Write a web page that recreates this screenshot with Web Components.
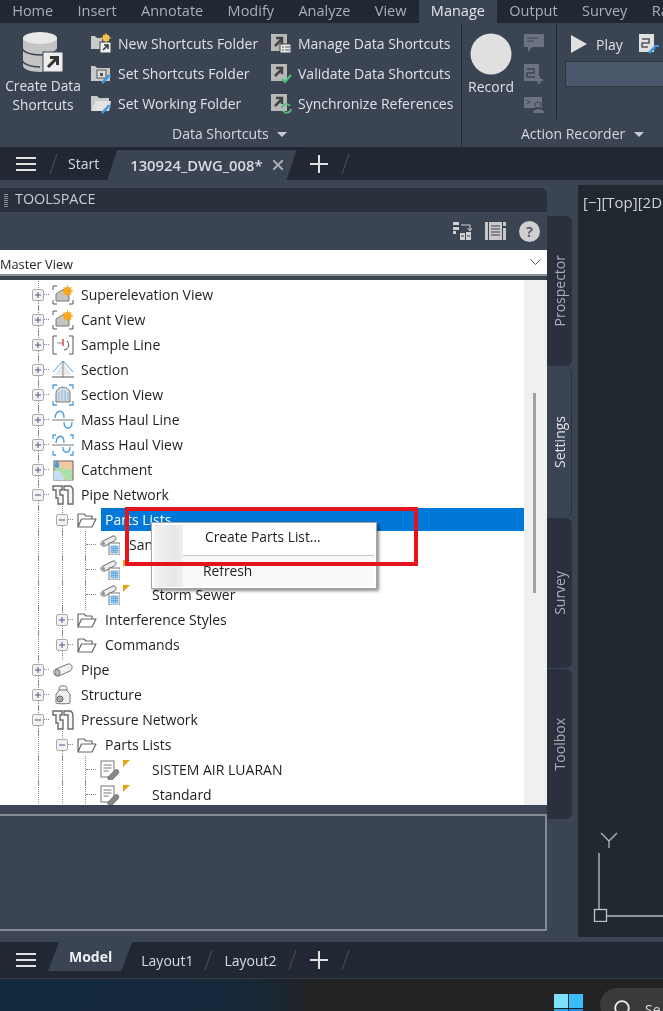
<!DOCTYPE html>
<html>
<head>
<meta charset="utf-8">
<title>Toolspace</title>
<style>
  html, body { margin: 0; height: 100%; background: #3b4453; overflow: hidden; }
  body { font-family: "Open Sans", "Noto Sans", sans-serif; }
  app-shell { filter: blur(.35px); }
</style>
</head>
<body>
<app-shell></app-shell>

<script>
// icons used in more than one place
const ICONS = {
  db: `<svg width="40" height="41" viewBox="0 0 40 41"><path d="M0 6v28c0 3 8 6 17 6s17-3 17-6V6z" fill="#c4c4c4"/><ellipse cx="17" cy="6" rx="17" ry="6" fill="#e8e8e8"/><path d="M0 17c0 3 8 6 17 6s17-3 17-6" fill="none" stroke="#3b4453" stroke-width="1.500"/><path d="M0 29c0 3 8 6 17 6" fill="none" stroke="#3b4453" stroke-width="1.500"/><rect x="20" y="20" width="20" height="20" fill="#eee" stroke="#3b4453"/><path d="M25 35l9-9M27 25.500h7.500v7.500" fill="none" stroke="#333" stroke-width="3"/></svg>`,
  newFolder: `<svg width="21" height="21" viewBox="0 0 21 21"><path d="M0 3h4l2 2h5v11H0z" fill="#c9c9c9"/><rect x="9" y="9" width="11" height="11" fill="#eee" stroke="#3b4453"/><path d="M12 17l5-5M13 12h4v4" fill="none" stroke="#333" stroke-width="1.500"/><circle cx="15" cy="5" r="3.500" fill="#f5c24a"/><path d="M15 0v10M10 5h10M12 2l6 6M18 2l-6 6" stroke="#f5c24a"/></svg>`,
  setFolder: `<svg width="21" height="21" viewBox="0 0 21 21"><path d="M0 3h4l2 2h13v13H0z" fill="#c9c9c9"/><rect x="6" y="7" width="9" height="8" fill="#ddd" stroke="#555"/><rect x="9" y="10" width="3" height="3" fill="#555"/><path d="M11 20l6-6" stroke="#3f97e0" stroke-width="2.500"/><path d="M16 13l4 0" stroke="#3f97e0" stroke-width="2"/></svg>`,
  workFolder: `<svg width="21" height="21" viewBox="0 0 21 21"><path d="M0 3h6l2 2h10v3H4L2 18H0z" fill="#c9c9c9"/><path d="M4 8h16l-2 10H1z" fill="#e2e2e2"/><path d="M11 20l6-6" stroke="#3f97e0" stroke-width="2.500"/><path d="M16 13l4 0" stroke="#3f97e0" stroke-width="2"/></svg>`,
  manage: `<svg width="21" height="21" viewBox="0 0 21 21"><rect y="1" width="16" height="17" fill="#b8b8b8"/><path d="M4 13l7-7M5 5h6v6" fill="none" stroke="#444" stroke-width="2.500"/><rect x="9" y="11" width="11" height="9" fill="#ececec" stroke="#3b4453"/><path d="M11 14h2M14 14h5M11 17h2M14 17h5" stroke="#555"/></svg>`,
  validate: `<svg width="21" height="21" viewBox="0 0 21 21"><rect y="1" width="16" height="17" fill="#b8b8b8"/><path d="M4 13l7-7M5 5h6v6" fill="none" stroke="#444" stroke-width="2.500"/><path d="M11 16l3 3 6-7" fill="none" stroke="#4cc27a" stroke-width="2.200"/></svg>`,
  sync: `<svg width="21" height="21" viewBox="0 0 21 21"><rect y="1" width="16" height="17" fill="#b8b8b8"/><path d="M4 13l7-7M5 5h6v6" fill="none" stroke="#444" stroke-width="2.500"/><path d="M11 15a4.500 4.500 0 0 1 8-2M20 16a4.500 4.500 0 0 1-8 2" fill="none" stroke="#4cc27a" stroke-width="1.800"/></svg>`,
  bubble: `<svg width="21" height="20" viewBox="0 0 21 20"><path d="M0 0h20v13H8l-4 5v-5H0z" fill="#6b7280"/><path d="M3 4h11M3 7h7" stroke="#3b4453"/></svg>`,
  stepAdd: `<svg width="21" height="20" viewBox="0 0 21 20"><rect width="15" height="17" fill="#6b7280"/><path d="M3 5h7v4H3v4h8" fill="none" stroke="#3b4453" stroke-width="1.500"/><path d="M15 12v8M11 16h8" stroke="#6b7280" stroke-width="2.500"/></svg>`,
  stepUser: `<svg width="21" height="17" viewBox="0 0 21 17"><rect y="0" width="18" height="11" fill="#6b7280"/><path d="M3 3l3 2-3 2" fill="none" stroke="#3b4453"/><circle cx="14" cy="8" r="3" fill="#6b7280" stroke="#3b4453"/><path d="M9 16c0-5 11-5 11 0z" fill="#6b7280"/></svg>`,
  stepTool: `<svg width="21" height="20" viewBox="0 0 21 20"><rect width="15" height="18" fill="#e0e0e0"/><path d="M3 5h7v4H3v4h6" fill="none" stroke="#555" stroke-width="1.500"/><path d="M10 19l6-6" stroke="#3f97e0" stroke-width="2.500"/><path d="M15 12l5 0" stroke="#3f97e0" stroke-width="2"/></svg>`,
  flip: `<svg width="19" height="18" viewBox="0 0 19 18"><path d="M0 0h6v3H0zM0 5h6v3H0zM0 9h3v3H0z" fill="#d0d0d0"/><path d="M8 3h9v5M14.500 6l2.500 3 2-3" fill="none" stroke="#d0d0d0"/><path d="M7 11h5v7H7zM13 10h5v8h-5z" fill="#d0d0d0"/><path d="M8 14h3M14 14h3" stroke="#3b4453"/></svg>`,
  sheet: `<svg width="21" height="18" viewBox="0 0 21 18"><path d="M0 0h3v18H0zM4 0h13v18H4zM18 6h3v12h-3zM18 0h3v4h-3z" fill="#c8c8c8"/><path d="M6 4h9M6 7h9M6 10h9M6 13h9" stroke="#3b4453"/></svg>`,
  pipeNet: `<svg width="22" height="20" viewBox="0 0 22 20"><path d="M1 1h9v4H8v5h3v9H6v-6H4V5H1zM12 1h5c3 0 4 2 4 5v13h-5V5h-4z" fill="#f6f6f6" stroke="#6a6a6a" stroke-width="1.400"/></svg>`,
  super: `<svg width="22" height="20" viewBox="0 0 22 20"><path d="M5 1H1v4M1 15v4h4M21 15v4h-4" fill="none" stroke="#555"/><path d="M4 9l8-5 5 4v8H4z" fill="#c5c5c5" stroke="#777"/><circle cx="15.500" cy="6" r="4" fill="#f6a81c"/><path d="M15.500 0v12M9.500 6h12M11.500 2l8 8M19.500 2l-8 8" stroke="#f6a81c"/></svg>`,
  sample: `<svg width="22" height="20" viewBox="0 0 22 20"><path d="M5 1H1v18h4M17 1h4v18h-4" fill="none" stroke="#555"/><path d="M5 8h6" stroke="#888"/><path d="M11 4v7" stroke="#d9484a" stroke-width="1.500"/><path d="M15 6c3 3 2 8-3 9" fill="none" stroke="#444"/></svg>`,
  section: `<svg width="22" height="20" viewBox="0 0 22 20"><path d="M11 1L1 12" stroke="#4a9ee0" fill="none"/><path d="M11 1l10 11" stroke="#4a9ee0" fill="none"/><path d="M11 2v15" stroke="#777"/><path d="M0 17h22" stroke="#555"/><path d="M10 4L3 15h7zM12 4l7 11h-7z" fill="#e8e8e8"/></svg>`,
  sectionView: `<svg width="22" height="22" viewBox="0 0 22 22"><path d="M1 5V1h4M17 1h4v4M1 17v4h4M21 17v4h-4" fill="none" stroke="#4a9ee0" stroke-width="1.300"/><path d="M4 18V10c0-9 14-9 14 0v8z" fill="#cfe0ee" stroke="#777"/><path d="M7 8v10M10 6v12M13 6v12M16 8v10" stroke="#9cb4c8"/></svg>`,
  massLine: `<svg width="22" height="20" viewBox="0 0 22 20"><path d="M0 10h22" stroke="#777"/><path d="M3 8c1-9 9-9 9 0" fill="none" stroke="#4a9ee0" stroke-width="1.300"/><path d="M12 12c0 8 8 8 8 0" fill="none" stroke="#4a9ee0" stroke-width="1.300"/></svg>`,
  massView: `<svg width="22" height="22" viewBox="0 0 22 22"><path d="M1 5V1h3M18 1h3v4M1 17v4h3M21 17v4h-3" fill="none" stroke="#4a9ee0" stroke-width="1.300"/><path d="M0 11h22" stroke="#777"/><path d="M4 9c1-9 8-9 8 0" fill="none" stroke="#4a9ee0" stroke-width="1.300"/><path d="M11 13c0 7 7 7 7 0" fill="none" stroke="#4a9ee0" stroke-width="1.300"/></svg>`,
  catchment: `<svg width="22" height="22" viewBox="0 0 22 22"><rect x="2" y="2" width="19" height="19" fill="#f4c7a0" stroke="#666"/><path d="M2 12c6-1 8 3 11 9H2z" fill="#bfe0f5"/><path d="M3 9c7-2 14 3 17 1v11h-6C12 15 8 11 3 12z" fill="#a9e2a9"/><path d="M5 1c3 4 3 8 0 8s-3-4 0-8z" fill="#4a9ee0"/></svg>`,
  folder: `<svg width="20" height="16" viewBox="0 0 20 16"><path d="M1 15V2h6l2 2h6v3M1 15L4.500 7H19l-4 8z" fill="#fff" stroke="#666" stroke-width="1.200" stroke-linejoin="round"/></svg>`,
  pipeList: `<svg width="20" height="20" viewBox="0 0 20 20"><path d="M3 6l10-5c3-.5 4 3 2 4.500L5 11C0 12 0 7 3 6z" fill="#eee" stroke="#666"/><circle cx="3.500" cy="8.500" r="1.500" fill="#888"/><rect x="9" y="8" width="11" height="12" fill="#fff" stroke="#777"/><path d="M11 11h7v7h-7zM11 13.300h7M11 15.600h7M13.300 11v7M15.600 11v7" fill="#bcdcf5" stroke="#3f97e0" stroke-width=".7"/></svg>`,
  pressList: `<svg width="20" height="20" viewBox="0 0 20 20"><rect x="1" y="1" width="13" height="16" fill="#fff" stroke="#777"/><path d="M3.500 5h8M3.500 8h8M3.500 11h5" stroke="#777"/><path d="M8 17l7-7c3-2 5 2 3 4l-6 6c-3 1-5-1-4-3z" fill="#888" stroke="#555" stroke-width=".6"/></svg>`,
  pipe: `<svg width="20" height="14" viewBox="0 0 20 14"><path d="M3 6l12-5c5-1 5 6 2 7L6 13C0 14 -1 7 3 6z" fill="#f2f2f2" stroke="#777"/><ellipse cx="4.500" cy="9.500" rx="2.500" ry="3" fill="#bbb" stroke="#777"/></svg>`,
  structure: `<svg width="18" height="20" viewBox="0 0 18 20"><path d="M5 3c0-3 8-3 8 0v3l3 3v9c0 1-14 1-14 0V9l3-3z" fill="#efefef" stroke="#777"/><path d="M5 5h8" stroke="#777"/><circle cx="6" cy="14" r="3" fill="#aaa" stroke="#666"/></svg>`
};
const SLASH = `<svg class="slash" width="9" height="20" viewBox="0 0 9 20"><path d="M8 0L1 20" stroke="#4b5361"/></svg>`;
const BURGER = `<svg width="20" height="16" viewBox="0 0 20 16" style="flex:none"><path d="M0 2h20M0 8h20M0 14h20" stroke="#e0e0e0" stroke-width="2"/></svg>`;
const PLUS = `<svg class="plus" width="18" height="18" viewBox="0 0 18 18"><path d="M9 0v18M0 9h18" stroke="#e0e0e0" stroke-width="2"/></svg>`;

class AppShell extends HTMLElement {
  constructor() {
    super();
    this.attachShadow({ mode: "open" });
    this.shadowRoot.innerHTML = `
      <style>
        :host { display: flex; flex-direction: column; width: 663px; height: 1011px; overflow: hidden; position: relative; }
        .work { display: flex; height: 762px; padding-top: 8px; box-sizing: border-box; background: #3b4453; flex: none; }
      </style>
      <ribbon-tabs></ribbon-tabs>
      <ribbon-body></ribbon-body>
      <file-tabs></file-tabs>
      <div class="work">
        <tool-space></tool-space>
        <side-tabs></side-tabs>
        <model-view></model-view>
      </div>
      <layout-tabs></layout-tabs>
      <task-bar></task-bar>
      <red-mark></red-mark>
    `;
  }
}

class RibbonTabs extends HTMLElement {
  constructor() {
    super();
    this.attachShadow({ mode: "open" });
    const tabs = ["Home", "Insert", "Annotate", "Modify", "Analyze", "View", "Manage", "Output", "Survey", "Ra"];
    this.shadowRoot.innerHTML = `
      <style>
        :host { display: flex; height: 23px; background: #212833; color: #a9afb8; font-size: 14.500px; overflow: hidden; white-space: nowrap; flex: none; }
        span { padding: 0 12.200px; line-height: 21px; }
        .on { background: #3b4453; color: #e4e6e9; }
      </style>
      ${tabs.map(t => `<span class="${t === "Manage" ? "on" : ""}">${t}</span>`).join("")}
    `;
  }
}

class RibbonBody extends HTMLElement {
  constructor() {
    super();
    this.attachShadow({ mode: "open" });
    this.shadowRoot.innerHTML = `
      <style>
        :host { display: flex; height: 124px; background: #3b4453; color: #dfe2e6; font-size: 14px; flex: none; white-space: nowrap; }
        .panel { display: flex; flex-direction: column; flex: none; }
        .tools { display: flex; flex: 1; }
        .title { height: 23px; line-height: 20px; color: #d5d8dc; }
        .title i { display: inline-block; border: 5px solid transparent; border-top: 5px solid #c8ccd1; border-bottom: 0; margin-left: 5px; vertical-align: 2px; }
        .big { display: flex; flex-direction: column; align-items: center; text-align: center; line-height: 19px; padding-top: 9px; flex: none; }
        .big svg { margin-bottom: 3px; }
        .big span { font-size: 13.700px; }
        .col { display: flex; flex-direction: column; padding-top: 10px; gap: 9px; flex: none; }
        .item { display: flex; align-items: center; gap: 6px; height: 21px; }
        .mini { display: flex; flex-direction: column; padding: 11px 0 0 4px; box-sizing: border-box; width: 36px; flex: none; }
        .sep { width: 1px; height: 95px; background: #222933; margin-top: 1px; flex: none; }
        .vr { width: 1px; height: 122px; background: #222933; margin-top: 1px; flex: none; }
        .play { display: flex; align-items: center; height: 22px; }
        .box { width: 110px; height: 26px; box-sizing: border-box; background: #4a566a; border: 1px solid #2e3541; margin: 6px 0 0 -5px; }
      </style>
      <div class="panel" style="width:461px">
        <div class="tools">
          <div class="big" style="width:86px">${ICONS.db}<span>Create Data<br>Shortcuts</span></div>
          <div class="col" style="width:180px;margin-left:5px">
            <div class="item">${ICONS.newFolder}<span>New Shortcuts Folder</span></div>
            <div class="item">${ICONS.setFolder}<span>Set Shortcuts Folder</span></div>
            <div class="item">${ICONS.workFolder}<span>Set Working Folder</span></div>
          </div>
          <div class="col">
            <div class="item">${ICONS.manage}<span>Manage Data Shortcuts</span></div>
            <div class="item">${ICONS.validate}<span>Validate Data Shortcuts</span></div>
            <div class="item">${ICONS.sync}<span>Synchronize References</span></div>
          </div>
        </div>
        <div class="title" style="padding-left:172px">Data Shortcuts <i></i></div>
      </div>
      <div class="vr"></div>
      <div class="panel" style="flex:1;min-width:0;overflow:hidden">
        <div class="tools">
          <div class="big" style="width:58px;padding-top:10px"><svg width="42" height="42" viewBox="0 0 42 42" style="margin-bottom:2px"><circle cx="21" cy="21" r="20.500" fill="#e0e0e0"/></svg><span style="font-size:14px">Record</span></div>
          <div class="mini"><div style="height:30px">${ICONS.bubble}</div><div style="height:33px">${ICONS.stepAdd}</div>${ICONS.stepUser}</div>
          <div class="sep"></div>
          <div style="padding:10px 0 0 13px;flex:none">
            <div class="play"><svg width="18" height="20" viewBox="0 0 18 20" style="margin-right:8px"><path d="M1 1l16 9-16 9z" fill="#e0e0e0"/></svg><span style="margin-right:16px">Play</span>${ICONS.stepTool}</div>
            <div class="box"></div>
          </div>
        </div>
        <div class="title" style="padding-left:59px">Action Recorder <i></i></div>
      </div>
    `;
  }
}

class FileTabs extends HTMLElement {
  constructor() {
    super();
    this.attachShadow({ mode: "open" });
    this.shadowRoot.innerHTML = `
      <style>
        :host { display: flex; align-items: center; height: 33px; background: #212833; color: #d9dce0; font-size: 14px; flex: none; white-space: nowrap; padding-left: 16px; box-sizing: border-box; }
        .slash { margin: 0 10px 0 13px; flex: none; }
        .active { display: flex; align-items: center; height: 30px; background: #3b4453; margin: 3px 0 0 8px; padding: 0 14px 0 23px; clip-path: polygon(10px 0, 100% 0, calc(100% - 10px) 100%, 0 100%); font-weight: 600; font-size: 14.800px; }
        .active svg { margin-left: 10px; }
        .plus { margin-left: 13px; }
        .last { margin-left: 13px; }
      </style>
      ${BURGER}
      ${SLASH}
      <span>Start</span>
      <div class="active"><span>130924_DWG_008*</span><svg width="10" height="10" viewBox="0 0 10 10"><path d="M0 0l10 10M10 0L0 10" stroke="#a9aeb5" stroke-width="2"/></svg></div>
      ${PLUS}
      <svg class="last" width="9" height="20" viewBox="0 0 9 20"><path d="M8 0L1 20" stroke="#4b5361"/></svg>
    `;
  }
}

class ToolSpace extends HTMLElement {
  constructor() {
    super();
    this.attachShadow({ mode: "open" });
    this.shadowRoot.innerHTML = `
      <style>
        :host { display: flex; flex-direction: column; width: 547px; flex: none; position: relative; }
        .head { height: 24px; background: #2a303c; border-radius: 0 6px 0 0; color: #c9cdd3; font-size: 14.400px; line-height: 22px; display: flex; gap: 7px; padding-left: 4px; flex: none; }
        .grip { width: 4px; height: 13px; margin-top: 6px; background: repeating-linear-gradient(#8a8f97 0 1px, transparent 1px 2px); }
        .bar { height: 38px; background: #3b4453; display: flex; justify-content: flex-end; align-items: center; gap: 13px; padding-right: 7px; box-sizing: border-box; flex: none; }
        .combo { height: 26px; background: #fff; color: #222; font-size: 12.800px; line-height: 28px; display: flex; justify-content: space-between; padding-right: 6px; border-bottom: 2px solid #8e9198; box-sizing: border-box; flex: none; }
        .combo svg { margin-top: 9px; }
        .gap { height: 4px; background: #3b4453; flex: none; }
        .tree { height: 525px; background: #fff; display: flex; overflow: hidden; flex: none; }
        .rows { flex: 1; position: relative; padding-top: 3px; }
        .track { width: 23px; background: #f0f0f0; position: relative; }
        .track::after { content: ""; position: absolute; left: 9px; top: 113px; width: 3px; height: 200px; background: #a0a0a0; }
        .info { height: 117px; margin-top: 9px; border: 2px solid #858a92; border-left: 0; box-sizing: border-box; background: #3b4453; flex: none; }
      </style>
      <div class="head"><span class="grip"></span><span>TOOLSPACE</span></div>
      <div class="bar">
        ${ICONS.flip}${ICONS.sheet}
        <svg width="21" height="21" viewBox="0 0 21 21"><circle cx="10.500" cy="10.500" r="10.500" fill="#cfcfcf"/><text x="10.500" y="16" text-anchor="middle" font-size="15" font-weight="700" fill="#5a606a" font-family="Open Sans">?</text></svg>
      </div>
      <div class="combo"><span>Master View</span><svg width="11" height="7" viewBox="0 0 11 7"><path d="M0.500 0.500l5 5 5-5" fill="none" stroke="#555"/></svg></div>
      <div class="gap"></div>
      <div class="tree">
        <div class="rows">
          <tree-row icon="super" toggle="plus">Superelevation View</tree-row>
          <tree-row icon="super" toggle="plus">Cant View</tree-row>
          <tree-row icon="sample" toggle="plus">Sample Line</tree-row>
          <tree-row icon="section" toggle="plus">Section</tree-row>
          <tree-row icon="sectionView" toggle="plus">Section View</tree-row>
          <tree-row icon="massLine" toggle="plus">Mass Haul Line</tree-row>
          <tree-row icon="massView" toggle="plus">Mass Haul View</tree-row>
          <tree-row icon="catchment" toggle="plus">Catchment</tree-row>
          <tree-row icon="pipeNet" toggle="minus">Pipe Network</tree-row>
          <tree-row level="1" icon="folder" toggle="minus" selected>Parts Lists</tree-row>
          <tree-row level="2" icon="pipeList">San</tree-row>
          <tree-row level="2" icon="pipeList" flag></tree-row>
          <tree-row level="2" icon="pipeList" flag>Storm Sewer</tree-row>
          <tree-row level="1" icon="folder" toggle="plus">Interference Styles</tree-row>
          <tree-row level="1" icon="folder" toggle="plus">Commands</tree-row>
          <tree-row icon="pipe" toggle="plus">Pipe</tree-row>
          <tree-row icon="structure" toggle="plus">Structure</tree-row>
          <tree-row icon="pipeNet" toggle="minus">Pressure Network</tree-row>
          <tree-row level="1" icon="folder" toggle="minus">Parts Lists</tree-row>
          <tree-row level="2" icon="pressList" flag>SISTEM AIR LUARAN</tree-row>
          <tree-row level="2" icon="pressList" flag>Standard</tree-row>
        </div>
        <div class="track"></div>
      </div>
      <div class="info"></div>
      <context-menu></context-menu>
    `;
  }
}

class TreeRow extends HTMLElement {
  constructor() {
    super();
    this.attachShadow({ mode: "open" });
  }
  connectedCallback() {
    const level = Number(this.getAttribute("level") || 0);
    const toggle = this.getAttribute("toggle");
    const sign = toggle === "minus" ? "M3 6h6" : "M3 6h6M6 3v6";
    // level 2 rows have no toggle, only the dotted connector
    this.shadowRoot.innerHTML = `
      <style>
        :host { display: flex; align-items: center; height: 25px; box-sizing: border-box; padding-bottom: 2px; color: #1e1e1e; font-size: 14px; white-space: nowrap; position: relative; }
        .indent { flex: none; }
        .tg { width: 12px; height: 12px; flex: none; background: #fff; position: relative; z-index: 1; }
        .dots { flex: none; border-top: 1px dotted #888; }
        .ic { width: 22px; height: 22px; flex: none; display: flex; align-items: center; justify-content: center; position: relative; }
        .tx { margin-left: 7px; position: relative; }
        .sel { position: absolute; left: 101px; right: 0; top: 0; height: 23px; background: #0078d7; }
        .flag { position: absolute; left: 123px; top: 2px; width: 7px; height: 7px; background: #e8a317; clip-path: polygon(0 0, 100% 0, 0 100%); }
        .vl { position: absolute; top: -2px; bottom: -2px; border-left: 1px dotted #888; }
      </style>
      ${this.vlines(level)}
      ${this.hasAttribute("selected") ? `<div class="sel"></div>` : ""}
      <div class="indent" style="width:${level === 2 ? 86 : 32 + level * 24}px"></div>
      ${toggle
        ? `<svg class="tg" viewBox="0 0 12 12"><rect x=".5" y=".5" width="11" height="11" rx="1.500" fill="#f2f2f2" stroke="#aaa"/><path d="${sign}" stroke="#4a5a8a"/></svg><span class="dots" style="width:5px;margin:0 3px 0 0"></span>`
        : `<span class="dots" style="width:10px;margin-right:3px"></span>`}
      <div class="ic">${ICONS[this.getAttribute("icon")]}</div>
      ${this.hasAttribute("flag") ? `<div class="flag"></div>` : ""}
      <span class="tx" style="${this.textStyle(level)}"><slot></slot></span>
    `;
  }
  vlines(level) {
    // dotted guide lines of the parents
    let out = `<div class="vl" style="left:38px"></div>`;
    if (level >= 1) out += `<div class="vl" style="left:62px"></div>`;
    if (level >= 2) out += `<div class="vl" style="left:85px"></div>`;
    return out;
  }
  textStyle(level) {
    if (this.hasAttribute("selected")) return "color:#fff;";
    if (level === 2) return this.hasAttribute("flag") ? "margin-left:31px;" : "margin-left:8px;";
    return "";
  }
}

class ContextMenu extends HTMLElement {
  constructor() {
    super();
    this.attachShadow({ mode: "open" });
    this.shadowRoot.innerHTML = `
      <style>
        :host { display: block; position: absolute; left: 151px; top: 334px; width: 226px; height: 67px; box-sizing: border-box; background: #fff; border: 1px solid #a5a5a5; box-shadow: 2px 2px 3px rgba(0,0,0,.45); color: #1e1e1e; font-size: 13.800px; }
        .wrap { display: flex; height: 62px; margin: 2px 2px 0; }
        .gutter { width: 29px; background: linear-gradient(90deg, #f3f3f3, #e6e6e6 70%, #f0f0f0); }
        .items { flex: 1; }
        .i { height: 30px; line-height: 24px; padding-left: 22px; }
        .r { padding-left: 20px; line-height: 30px; height: 30px; background: #f9f9f9; }
        hr { margin: 0; border: 0; border-top: 1px solid #c9c9c9; }
      </style>
      <div class="wrap">
        <div class="gutter"></div>
        <div class="items">
          <div class="i">Create Parts List...</div>
          <hr>
          <div class="i r">Refresh</div>
        </div>
      </div>
    `;
  }
}

// the red box somebody drew over the screenshot
class RedMark extends HTMLElement {
  constructor() {
    super();
    this.attachShadow({ mode: "open" });
    this.shadowRoot.innerHTML = `<style>:host { display: block; position: absolute; left: 125px; top: 507px; width: 293px; height: 59px; box-sizing: border-box; border: 4px solid #e5141c; pointer-events: none; }</style>`;
  }
}

class SideTabs extends HTMLElement {
  constructor() {
    super();
    this.attachShadow({ mode: "open" });
    const names = ["Prospector", "Settings", "Survey", "Toolbox"];
    this.shadowRoot.innerHTML = `
      <style>
        :host { display: flex; flex-direction: column; width: 25px; flex: none; margin-top: 28px; margin-right: 6px; gap: 1px; }
        div { height: 150px; flex: none; box-sizing: border-box; background: #2a303c; border-radius: 0 6px 6px 0; color: #a9afb8; font-size: 14px; display: flex; align-items: center; justify-content: center; }
        div:first-child { height: 151px; }
        div.on { background: #3b4453; color: #dfe2e6; border-right: 1px solid #2a303c; }
        span { writing-mode: vertical-rl; transform: rotate(180deg); }
      </style>
      ${names.map(n => `<div class="${n === "Settings" ? "on" : ""}"><span>${n}</span></div>`).join("")}
    `;
  }
}

class ModelView extends HTMLElement {
  constructor() {
    super();
    this.attachShadow({ mode: "open" });
    this.shadowRoot.innerHTML = `
      <style>
        :host { display: block; flex: 1; background: #212830; color: #cfd2d6; font-size: 15px; position: relative; height: 752px; margin-top: -3px; overflow: hidden; }
        .label { padding: 8px 0 0 5px; white-space: nowrap; line-height: 19px; }
        svg { position: absolute; left: 0; top: 645px; }
      </style>
      <div class="label">[&#8722;][Top][2D</div>
      <svg width="85" height="92" viewBox="0 0 85 92">
        <path d="M23 3l8 8 8-8M31 11v7" fill="none" stroke="#b5b7ba" stroke-width="1.300"/>
        <path d="M21 23v56M28 86h57" stroke="#b5b7ba" stroke-width="1.400" fill="none"/>
        <rect x="16.500" y="79.500" width="12" height="12" fill="none" stroke="#c2c4c6" stroke-width="1.300"/>
      </svg>
    `;
  }
}

class LayoutTabs extends HTMLElement {
  constructor() {
    super();
    this.attachShadow({ mode: "open" });
    this.shadowRoot.innerHTML = `
      <style>
        :host { display: flex; align-items: center; height: 36px; background: #212833; color: #d9dce0; font-size: 14px; flex: none; padding-left: 16px; box-sizing: border-box; white-space: nowrap; }
        .model { height: 29px; align-self: flex-start; display: flex; align-items: center; background: #3b4453; padding: 0 20px 0 21px; margin-left: 12px; clip-path: polygon(11px 0, 100% 0, calc(100% - 11px) 100%, 0 100%); font-weight: 700; color: #eef0f2; }
        .slash { margin: 0 11px; flex: none; }
        .plus { margin: 0 13px 0 2px; flex: none; }
      </style>
      ${BURGER}
      <div class="model">Model</div>
      <span style="margin-left:9px">Layout1</span>
      ${SLASH}
      <span>Layout2</span>
      ${SLASH}
      ${PLUS}
      <svg width="9" height="20" viewBox="0 0 9 20"><path d="M8 0L1 20" stroke="#4b5361"/></svg>
    `;
  }
}

class TaskBar extends HTMLElement {
  constructor() {
    super();
    this.attachShadow({ mode: "open" });
    this.shadowRoot.innerHTML = `
      <style>
        :host { display: block; height: 33px; flex: none; background: linear-gradient(90deg, #122a3c, #14283a 36%, #232323 48%); border-top: 1px solid #3a3d42; box-sizing: border-box; overflow: hidden; color: #ddd; font-size: 14px; }
        .row { display: flex; padding: 15px 0 0 554px; gap: 17px; }
        .search { width: 90px; height: 34px; border-radius: 17px; background: #3a3a3a; display: flex; gap: 15px; padding: 12px 0 0 14px; box-sizing: border-box; flex: none; margin-top: -6px; }
      </style>
      <div class="row">
        <svg width="29" height="29" viewBox="0 0 29 29" style="flex:none"><path d="M0 0h14v14H0z" fill="#7fe0fb"/><path d="M15 0h14v14H15z" fill="#38bdf8"/><path d="M0 15h14v14H0z" fill="#2aa3ec"/><path d="M15 15h14v14H15z" fill="#1c8fe6"/></svg>
        <div class="search"><svg width="16" height="16" viewBox="0 0 16 16" style="flex:none"><circle cx="8" cy="8" r="6.800" fill="none" stroke="#eee" stroke-width="1.800"/></svg><span>Se</span></div>
      </div>
    `;
  }
}

customElements.define("app-shell", AppShell);
customElements.define("ribbon-tabs", RibbonTabs);
customElements.define("ribbon-body", RibbonBody);
customElements.define("file-tabs", FileTabs);
customElements.define("tool-space", ToolSpace);
customElements.define("tree-row", TreeRow);
customElements.define("context-menu", ContextMenu);
customElements.define("red-mark", RedMark);
customElements.define("side-tabs", SideTabs);
customElements.define("model-view", ModelView);
customElements.define("layout-tabs", LayoutTabs);
customElements.define("task-bar", TaskBar);
</script>
</body>
</html>
